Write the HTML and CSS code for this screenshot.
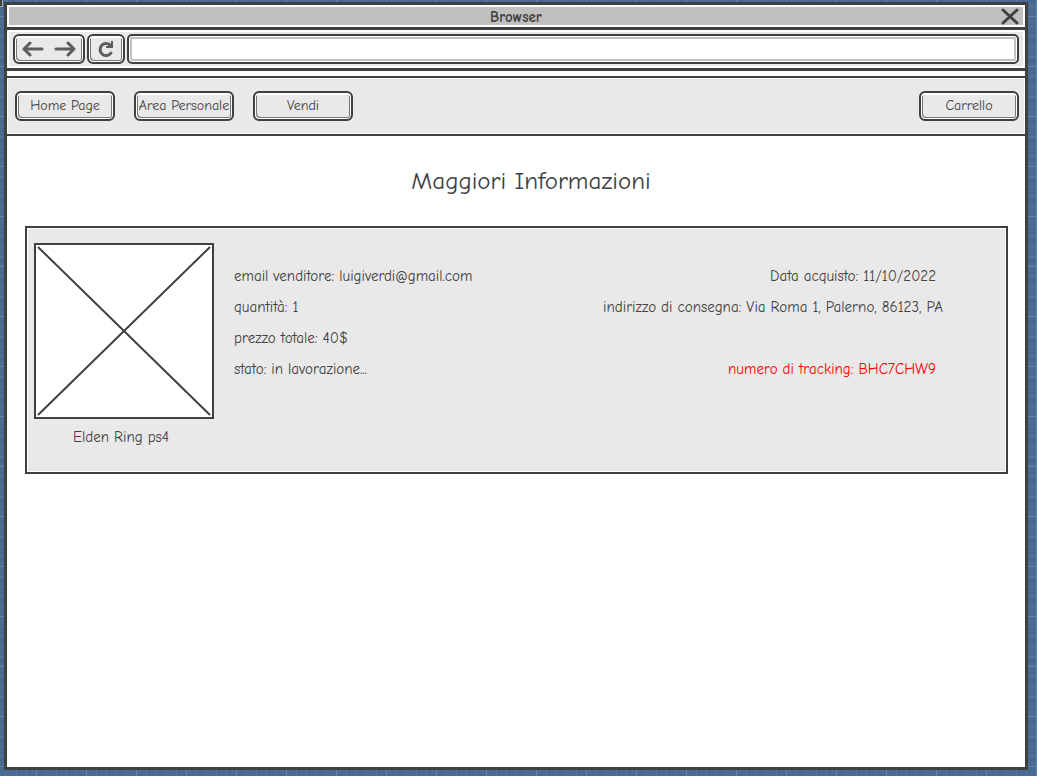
FILE: index.html
```html
<!DOCTYPE html>
<html lang="it">
<head>
<meta charset="utf-8">
<meta name="viewport" content="width=device-width, initial-scale=1">
<title>Maggiori Informazioni</title>
<link rel="stylesheet" href="styles.css">
</head>
<body>
<div class="window">
  <header class="titlebar">
    <span class="titlebar-text">Browser</span>
    <button class="close" type="button" aria-label="Chiudi">
      <svg width="18" height="18" viewBox="0 0 18 18"><path d="M2 2L16 15M16 2L2 15" fill="none" stroke="#404040" stroke-width="3" stroke-linecap="round"/></svg>
    </button>
  </header>
  <div class="toolbar">
    <div class="box history">
      <button class="tool" type="button" aria-label="Indietro">
        <svg width="22" height="16" viewBox="0 0 22 16"><path d="M20 8H2M8 2L2 8L8 14" fill="none" stroke="#5e5e5c" stroke-width="3" stroke-linecap="round" stroke-linejoin="round"/></svg>
      </button>
      <button class="tool" type="button" aria-label="Avanti">
        <svg width="22" height="16" viewBox="0 0 22 16"><path d="M2 8H20M14 2L20 8L14 14" fill="none" stroke="#5e5e5c" stroke-width="3" stroke-linecap="round" stroke-linejoin="round"/></svg>
      </button>
    </div>
    <button class="box reload" type="button" aria-label="Ricarica">
      <svg width="18" height="18" viewBox="0 0 18 18"><path d="M14 13A6 6 0 1 1 13 5" fill="none" stroke="#5e5e5c" stroke-width="3" stroke-linecap="round"/><path d="M15 1V7H9" fill="none" stroke="#5e5e5c" stroke-width="2"/></svg>
    </button>
    <input class="address" type="text" aria-label="Indirizzo">
  </div>
  <nav class="nav">
    <button class="box nav-button" type="button">Home Page</button>
    <button class="box nav-button" type="button">Area Personale</button>
    <button class="box nav-button" type="button">Vendi</button>
    <button class="box nav-button cart" type="button">Carrello</button>
  </nav>
  <main class="page">
    <h1 class="title">Maggiori Informazioni</h1>
    <section class="card">
      <figure class="product">
        <svg class="placeholder" viewBox="0 0 176 172" preserveAspectRatio="none" role="img" aria-label="Elden Ring ps4"><path d="M2 2L174 170M174 2L2 170" fill="none" stroke="#404040" stroke-width="2"/></svg>
        <figcaption class="caption">Elden Ring ps4</figcaption>
      </figure>
      <div class="details">
        <p class="line"><span>email venditore: luigiverdi@gmail.com</span><span class="end">Data acquisto: 11/10/2022</span></p>
        <p class="line"><span>quantità: 1</span><span class="end wide">indirizzo di consegna: Via Roma 1, Palerno, 86123, PA</span></p>
        <p class="line"><span>prezzo totale: 40$</span></p>
        <p class="line"><span>stato: in lavorazione...</span><span class="end tracking">numero di tracking: BHC7CHW9</span></p>
      </div>
    </section>
  </main>
</div>
</body>
</html>
```
FILE: styles.css
```css
* { box-sizing: border-box; }
body {
  margin: 0;
  min-height: 100vh;
  padding: 2px 9px 6px 4px;
  display: flex;
  color: #404040;
  font-family: "Comic Sans MS", "Comic Neue", "Noto Sans", sans-serif;
  font-size: 15px;
  line-height: 20px;
  background-color: #496b93;
  background-image:
    linear-gradient(90deg, #6484ac 1px, transparent 1px),
    linear-gradient(#6484ac 1px, transparent 1px),
    linear-gradient(90deg, #56779f 1px, transparent 1px),
    linear-gradient(#56779f 1px, transparent 1px);
  background-size: 50px 50px, 50px 50px, 10px 10px, 10px 10px;
  background-position: 36px 0, 0 16px, 6px 0, 0 6px;
}
/* corner of a neighbouring shape on the canvas */
body::before {
  content: "";
  position: absolute;
  top: 0;
  left: 0;
  width: 2px;
  height: 6px;
  border: solid #a0a8b4;
  border-width: 0 1px 1px 0;
  background: #404040;
}
button, input { font: inherit; color: inherit; }
button { cursor: pointer; }
svg { display: block; }
.window {
  flex: 1;
  display: flex;
  flex-direction: column;
  border: 3px solid #404040;
  background: #fff;
}
.titlebar {
  height: 22px;
  border: 2px solid #fff;
  display: grid;
  grid-template-columns: 22px 1fr 22px;
  align-items: center;
  background: #c0c0c0;
  font-weight: bold;
}
.titlebar-text { grid-column: 2; text-align: center; }
.close { border: 0; padding: 0; background: none; }
.toolbar {
  height: 38px;
  padding: 2px 4px;
  display: flex;
  gap: 2px;
  border: 2px solid #fff;
  outline: 3px solid #404040;
  margin: 3px 0;
  background: #e9e9e9;
}
.box {
  height: 30px;
  padding: 0;
  border: 2px solid #404040;
  border-radius: 6px;
  background: #e9e9e9;
  box-shadow: inset 0 2px #fff, inset 1px -1px #fff, inset -1px 0 #fff, inset 2px -2px #777, inset -2px 0 #777;
}
.history { width: 72px; display: flex; align-items: center; justify-content: center; gap: 10px; }
.tool { padding: 0; border: 0; background: none; }
.reload { width: 38px; display: grid; place-items: center; }
.address {
  flex: 1;
  min-width: 0;
  height: 30px;
  padding: 0 8px;
  border: 2px solid #404040;
  border-radius: 5px;
  background: #fff;
  box-shadow: inset 0 0 0 1px #fff, inset 0 0 0 3px #c0c0c0;
}
.nav {
  margin-top: 5px;
  padding: 13px 6px 13px 8px;
  display: flex;
  gap: 19px;
  border: solid #404040;
  border-width: 2px 0;
  background: #e9e9e9;
  box-shadow: inset 0 0 0 1px #fff;
}
.nav-button { width: 100px; font-size: 14px; white-space: nowrap; }
.cart { margin-left: auto; }
.page { padding: 28px 17px 28px 18px; }
.title {
  margin: 0 0 28px;
  padding-left: 29px;
  text-align: center;
  font-size: 25px;
  line-height: 34px;
  font-weight: normal;
}
.card {
  min-height: 248px;
  padding: 15px 7px;
  display: flex;
  gap: 20px;
  border: 2px solid #404040;
  background: #e9e9e9;
  box-shadow: inset 0 0 0 1px #fff;
}
.product { margin: 0; width: 180px; }
.placeholder { width: 180px; height: 176px; border: 2px solid #404040; background: #fff; }
.caption { padding: 8px 6px 0 0; text-align: center; }
.details { flex: 1; padding: 23px 56px 0 0; display: flex; flex-direction: column; gap: 11px; }
.line { margin: 0; display: flex; justify-content: space-between; }
.line:nth-child(3) { min-height: 20px; }
.end { padding-right: 7px; }
.wide { padding-right: 0; }
.tracking { color: #f00; }
```
